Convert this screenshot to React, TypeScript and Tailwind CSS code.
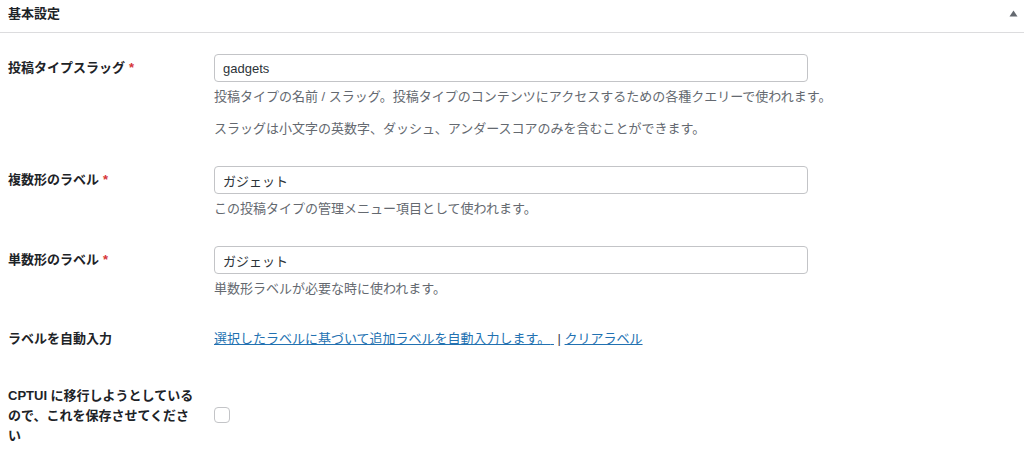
import React from 'react';

const font = "font-['Liberation_Sans','Noto_Sans_CJK_JP',sans-serif]";

function Required() {
  return <span className="ml-1 text-[#d63638]">*</span>;
}

function TextRow({ label, value, children }: { label: string; value: string; children?: React.ReactNode }) {
  return (
    <div className="grid grid-cols-[206px_1fr] pb-[12px] pt-[15px]">
      <div className="pt-[4px] text-[13px] font-bold leading-[20px] text-[#1d2327]">
        {label}
        <Required />
      </div>
      <div>
        <input
          type="text"
          defaultValue={value}
          className="block h-[28px] w-[594px] rounded-[4px] border border-[#c3c4c7] bg-white px-2 text-[13px] text-[#2c3338] outline-none"
        />
        {children}
      </div>
    </div>
  );
}

function Desc({ children, first }: { children: React.ReactNode; first?: boolean }) {
  return (
    <p className={`${first ? 'mt-[5px]' : 'mt-3'} text-[13px] leading-[20px] text-[#646970]`}>{children}</p>
  );
}

export default function App() {
  return (
    <div className={`${font} min-h-[450px] w-full bg-white`}>
      {/* Panel header */}
      <div className="flex h-[33px] items-center justify-between border-b border-[#dcdcde] pb-[4px] pl-2 pr-[6px]">
        <h2 className="text-[13px] font-bold leading-[20px] text-[#1d2327]">基本設定</h2>
        <svg width="9" height="7" viewBox="0 0 9 7" className="mb-[2px]">
          <path d="M4.5 0.5 L8.5 6.5 L0.5 6.5 Z" fill="#646970" />
        </svg>
      </div>

      <div className="pl-2 pt-[6px]">
        <TextRow label="投稿タイプスラッグ" value="gadgets">
          <Desc first>投稿タイプの名前 / スラッグ。投稿タイプのコンテンツにアクセスするための各種クエリーで使われます。</Desc>
          <Desc>スラッグは小文字の英数字、ダッシュ、アンダースコアのみを含むことができます。</Desc>
        </TextRow>

        <TextRow label="複数形のラベル" value="ガジェット">
          <Desc first>この投稿タイプの管理メニュー項目として使われます。</Desc>
        </TextRow>

        <TextRow label="単数形のラベル" value="ガジェット">
          <Desc first>単数形ラベルが必要な時に使われます。</Desc>
        </TextRow>

        <div className="grid grid-cols-[206px_1fr] pb-[17px] pt-[18px]">
          <div className="text-[13px] font-bold leading-[20px] text-[#1d2327]">ラベルを自動入力</div>
          <div className="text-[13px] leading-[20px] text-[#3c434a]">
            <a href="#" className="text-[#2271b1] underline">
              選択したラベルに基づいて追加ラベルを自動入力します。{'\u00a0'}
            </a>
            {' | '}
            <a href="#" className="text-[#2271b1] underline">
              クリアラベル
            </a>
          </div>
        </div>

        <div className="grid grid-cols-[206px_1fr] items-center pt-[20px]">
          <div className="text-[13px] font-bold leading-[20px] text-[#1d2327]">
            CPTUI に移行しようとしている
            <br />
            ので、これを保存させてくださ
            <br />い
          </div>
          <div className="pb-[2px]">
            <input
              type="checkbox"
              className="block h-4 w-4 appearance-none rounded-[4px] border border-[#c3c4c7] bg-white"
            />
          </div>
        </div>
      </div>
    </div>
  );
}
